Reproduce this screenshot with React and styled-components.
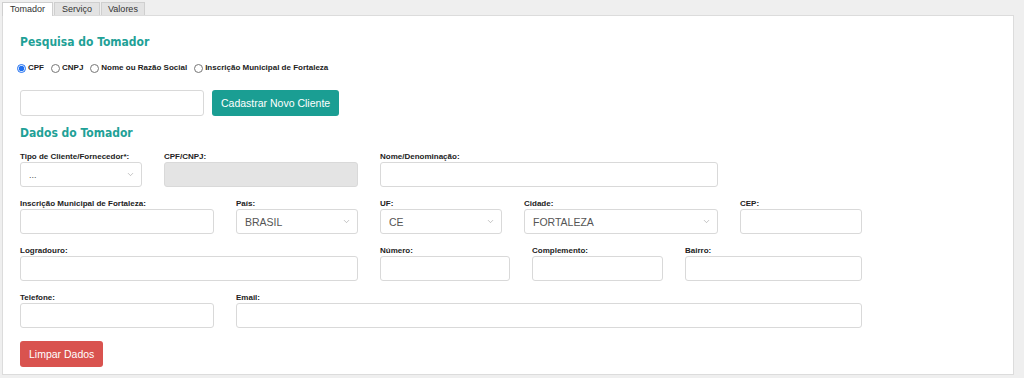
import styled, { createGlobalStyle } from 'styled-components';
import { ChevronDown } from 'lucide-react';

const GlobalStyle = createGlobalStyle`
  html, body {
    margin: 0;
    padding: 0;
    background: #efefef;
  }
  body {
    font-family: "Liberation Sans", Arial, sans-serif;
    color: #333;
  }
`;

const Page = styled.div`
  width: 1024px;
  height: 378px;
  padding-top: 2px;
  box-sizing: border-box;
`;

const TabBar = styled.div`
  display: flex;
  gap: 1px;
  padding-left: 2px;
  height: 13px;
`;

const Tab = styled.div`
  height: 13px;
  padding: 0 ${p => p.$pad}px;
  box-sizing: border-box;
  border: 1px solid #cfcfcf;
  border-bottom: none;
  background: ${p => (p.$active ? '#fff' : '#e3e3e3')};
  font-size: 9px;
  line-height: 13px;
  color: #333;
  position: relative;
  z-index: 1;
  ${p => p.$active && 'height: 14px;'}
`;

const Panel = styled.div`
  margin-left: 2px;
  width: 1012px;
  height: 360px;
  box-sizing: border-box;
  background: #fff;
  border: 1px solid #dcdcdc;
  padding: 18px 16px 0 17px;
`;

const Heading = styled.h2`
  margin: 0;
  font-family: "Liberation Sans Narrow", "DejaVu Sans Condensed", "Liberation Sans", sans-serif;
  font-weight: bold;
  font-size: 12px;
  line-height: 16px;
  color: #1fa197;
  margin-top: ${p => p.$top || 0}px;
`;

const RadioRow = styled.div`
  display: flex;
  align-items: center;
  margin-top: 13px;
  margin-left: -3px;
  height: 10px;
`;

const RadioLabel = styled.label`
  display: flex;
  align-items: center;
  font-size: 8px;
  font-weight: bold;
  line-height: 10px;
  color: #222;
  margin-right: 7px;
`;

const Radio = styled.input`
  width: 9px;
  height: 9px;
  margin: 0 2px 0 0;
  accent-color: #1f6ff0;
`;

const SearchRow = styled.div`
  display: flex;
  gap: 8px;
  margin-top: 17px;
`;

const SearchInput = styled.input`
  width: 184px;
  height: 26px;
  box-sizing: border-box;
  border: 1px solid #d9d9d9;
  border-radius: 3px;
  outline: none;
`;

const Button = styled.button`
  height: 26px;
  padding: 0 ${p => p.$pad || 10}px;
  border: none;
  border-radius: 3px;
  background: ${p => p.$color};
  color: #fff;
  font-family: "Liberation Sans", Arial, sans-serif;
  font-size: 10.5px;
`;

const FormGrid = styled.div`
  display: grid;
  grid-template-columns: repeat(12, 50px);
  column-gap: 22px;
  row-gap: 11px;
  margin-top: 10px;
`;

const Field = styled.div`
  grid-column: span ${p => p.$span};
  display: flex;
  flex-direction: column;
`;

const SubRow = styled.div`
  grid-column: span ${p => p.$span};
  display: grid;
  grid-template-columns: 130px 131px 1fr;
  column-gap: 22px;
`;

const Label = styled.label`
  font-size: 8px;
  font-weight: bold;
  line-height: 11px;
  color: #222;
`;

const TextInput = styled.input`
  width: 100%;
  height: 25px;
  box-sizing: border-box;
  border: 1px solid #d9d9d9;
  border-radius: 3px;
  background: ${p => (p.disabled ? '#e4e4e4' : '#fff')};
  outline: none;
`;

const SelectWrap = styled.div`
  position: relative;
  width: 100%;
`;

const Select = styled.select`
  width: 100%;
  height: 25px;
  box-sizing: border-box;
  border: 1px solid #d9d9d9;
  border-radius: 3px;
  background: #fff;
  appearance: none;
  padding: 0 0 0 8px;
  font-family: "Liberation Sans", Arial, sans-serif;
  font-size: ${p => (p.$small ? 9 : 10.5)}px;
  color: #555;
  outline: none;
`;

const Chevron = styled(ChevronDown)`
  position: absolute;
  right: 7px;
  top: 8px;
  color: #999;
  pointer-events: none;
`;

const Footer = styled.div`
  margin-top: 13px;
`;

const SelectField = ({ value, small }) => (
  <SelectWrap>
    <Select $small={small} defaultValue={value}>
      <option>{value}</option>
    </Select>
    <Chevron size={9} strokeWidth={1.5} />
  </SelectWrap>
);

const App = () => {
  return (
    <Page>
      <GlobalStyle />
      <TabBar>
        <Tab $active $pad={7}>Tomador</Tab>
        <Tab $pad={7}>Serviço</Tab>
        <Tab $pad={6}>Valores</Tab>
      </TabBar>
      <Panel>
        <Heading>Pesquisa do Tomador</Heading>
        <RadioRow>
          <RadioLabel><Radio type="radio" name="tipo" defaultChecked />CPF</RadioLabel>
          <RadioLabel><Radio type="radio" name="tipo" />CNPJ</RadioLabel>
          <RadioLabel><Radio type="radio" name="tipo" />Nome ou Razão Social</RadioLabel>
          <RadioLabel><Radio type="radio" name="tipo" />Inscrição Municipal de Fortaleza</RadioLabel>
        </RadioRow>
        <SearchRow>
          <SearchInput />
          <Button $color="#1a9e93" $pad={9}>Cadastrar Novo Cliente</Button>
        </SearchRow>
        <Heading $top={9}>Dados do Tomador</Heading>
        <FormGrid>
          <Field $span={2}>
            <Label>Tipo de Cliente/Fornecedor*:</Label>
            <SelectField value="..." small />
          </Field>
          <Field $span={3}>
            <Label>CPF/CNPJ:</Label>
            <TextInput disabled />
          </Field>
          <Field $span={5}>
            <Label>Nome/Denominação:</Label>
            <TextInput />
          </Field>

          <Field $span={3}>
            <Label>Inscrição Municipal de Fortaleza:</Label>
            <TextInput />
          </Field>
          <Field $span={2}>
            <Label>País:</Label>
            <SelectField value="BRASIL" />
          </Field>
          <Field $span={2}>
            <Label>UF:</Label>
            <SelectField value="CE" />
          </Field>
          <Field $span={3}>
            <Label>Cidade:</Label>
            <SelectField value="FORTALEZA" />
          </Field>
          <Field $span={2}>
            <Label>CEP:</Label>
            <TextInput />
          </Field>

          <Field $span={5}>
            <Label>Logradouro:</Label>
            <TextInput />
          </Field>
          <SubRow $span={7}>
            <Field>
              <Label>Número:</Label>
              <TextInput />
            </Field>
            <Field>
              <Label>Complemento:</Label>
              <TextInput />
            </Field>
            <Field>
              <Label>Bairro:</Label>
              <TextInput />
            </Field>
          </SubRow>

          <Field $span={3}>
            <Label>Telefone:</Label>
            <TextInput />
          </Field>
          <Field $span={9}>
            <Label>Email:</Label>
            <TextInput />
          </Field>
        </FormGrid>
        <Footer>
          <Button $color="#d9534f" $pad={9}>Limpar Dados</Button>
        </Footer>
      </Panel>
    </Page>
  );
};

export default App;
